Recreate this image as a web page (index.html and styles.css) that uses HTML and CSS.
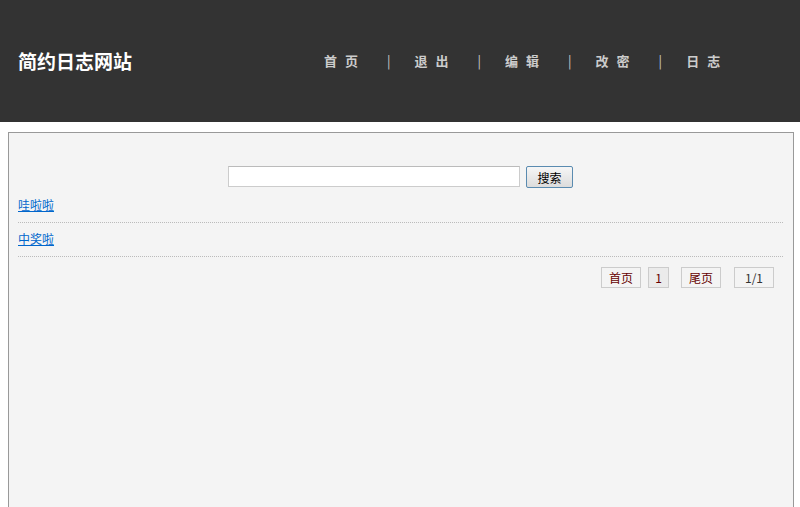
FILE: index.html
```html
<!DOCTYPE html>
<html lang="zh">
<head>
    <meta charset="UTF-8">
    <title>简约日志网站</title>
    <link rel="stylesheet" href="styles.css">
</head>
<body>

    <!-- 头部 -->
    <div class="header">
        <div class="logo">简约日志网站</div>
        <div class="nav">
            <a href="#">首页</a><span class="sep">|</span>
            <a href="#">退出</a><span class="sep">|</span>
            <a href="#">编辑</a><span class="sep">|</span>
            <a href="#">改密</a><span class="sep">|</span>
            <a href="#">日志</a>
        </div>
    </div>

    <!-- 内容 -->
    <div class="main">
        <form class="search">
            <input type="text" class="kw">
            <button type="button" class="btn">搜索</button>
        </form>
        <ul class="list">
            <li><a href="#">哇啦啦</a></li>
            <li><a href="#">中奖啦</a></li>
        </ul>
        <div class="pages">
            <a href="#" class="pg">首页</a>
            <span class="pg cur">1</span>
            <a href="#" class="pg wide">尾页</a>
            <span class="pg num">1/1</span>
        </div>
    </div>

</body>
</html>
```

FILE: styles.css
```css
body {
    margin: 0;
    font-family: "Noto Sans CJK SC", "DejaVu Sans", sans-serif;
    font-size: 12px;
    background: #fff;
}

.header {
    height: 122px;
    background: #333;
    display: flex;
    align-items: center;
}

.logo {
    margin-left: 18px;
    width: 306px;
    color: #fff;
    font-size: 19px;
    font-weight: bold;
    margin-top: -2px;
}

.nav {
    display: flex;
    align-items: center;
    color: #ccc;
    font-size: 13px;
    font-weight: bold;
    margin-top: -2px;
}

.nav a {
    color: #ccc;
    text-decoration: none;
    letter-spacing: 8px;
}

.nav .sep {
    margin: 0 24px 0 21px;
    font-weight: normal;
}

.main {
    margin: 10px 6px 0 8px;
    min-height: 420px;
    border: 1px solid #999;
    background: #f4f4f4;
    padding: 33px 10px 0 9px;
}

.search {
    display: flex;
    justify-content: center;
    align-items: flex-start;
    margin: 0;
}

.kw {
    width: 292px;
    height: 21px;
    box-sizing: border-box;
    border: 1px solid #ccc;
    border-top-color: #bbb;
    background: #fff;
    margin: 0 6px 0 0;
}

.btn {
    width: 47px;
    height: 22px;
    box-sizing: border-box;
    border: 1px solid #5a8bb0;
    border-radius: 2px;
    background: linear-gradient(#f6f6f6, #dcdcdc);
    font-family: inherit;
    font-size: 12px;
    color: #000;
    padding: 0;
}

.list {
    list-style: none;
    margin: 1px 0 0;
    padding: 0;
}

.list li {
    padding: 8px 0 9px;
    line-height: 16px;
    border-bottom: 1px dotted #bbb;
}

.list a {
    color: #0066cc;
    font-size: 12px;
}

.pages {
    display: flex;
    justify-content: flex-end;
    margin: 10px 9px 0 0;
}

.pg {
    height: 21px;
    line-height: 19px;
    box-sizing: border-box;
    border: 1px solid #ccc;
    background: #f4f4f4;
    color: #660000;
    text-decoration: none;
    text-align: center;
    width: 40px;
    font-size: 12px;
}

.cur {
    width: 21px;
    background: #ebebeb;
    margin: 0 12px 0 7px;
}

.wide {
    margin-right: 13px;
}

.num {
    color: #333;
}
```
